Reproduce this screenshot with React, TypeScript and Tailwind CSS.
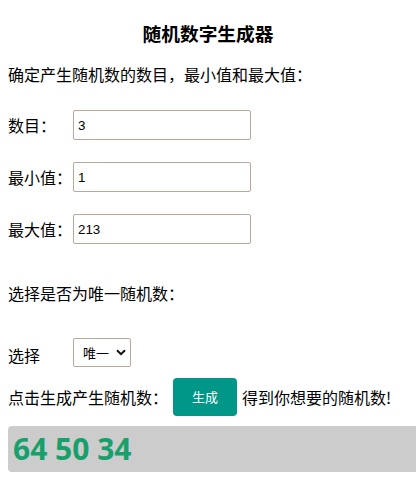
import { useState } from 'react';

const inputCls =
  "h-[30px] w-[178px] rounded-[2px] border border-[#b9a89e] bg-white px-[4px] font-['Liberation_Sans',Arial,sans-serif] text-[13.33px] text-black outline-none";

export default function App() {
  const [count, setCount] = useState('3');
  const [min, setMin] = useState('1');
  const [max, setMax] = useState('213');
  const [unique, setUnique] = useState('unique');
  const [result] = useState('64 50 34');

  return (
    <div className="px-2 font-['Noto_Sans_CJK_SC','Noto_Sans',sans-serif] text-[16px] text-black">
      <h3 className="pt-[20px] text-center text-[18.72px] font-bold leading-[26px]">随机数字生成器</h3>
      <p className="mt-[16px] leading-[24px]">确定产生随机数的数目，最小值和最大值：</p>

      <div className="mt-[24px] flex flex-col gap-[22px]">
        <div className="flex h-[30px] items-center">
          <label className="w-[65px] leading-[24px]">数目：</label>
          <input className={inputCls} value={count} onChange={(e) => setCount(e.target.value)} />
        </div>
        <div className="flex h-[30px] items-center">
          <label className="w-[65px] leading-[24px]">最小值：</label>
          <input className={inputCls} value={min} onChange={(e) => setMin(e.target.value)} />
        </div>
        <div className="flex h-[30px] items-center">
          <label className="w-[65px] leading-[24px]">最大值：</label>
          <input className={inputCls} value={max} onChange={(e) => setMax(e.target.value)} />
        </div>
      </div>

      <p className="mt-[37px] leading-[24px]">选择是否为唯一随机数：</p>

      <div className="mt-[33px] flex h-[29px] items-center">
        <label className="w-[65px] pt-[4px] leading-[24px]">选择</label>
        <div className="relative h-[29px] w-[58px]">
          <select
            value={unique}
            onChange={(e) => setUnique(e.target.value)}
            className="h-full w-full appearance-none rounded-[2px] border border-[#b9a89e] bg-white pl-[9px] text-[13px] text-black outline-none"
          >
            <option value="unique">唯一</option>
            <option value="repeat">可重复</option>
          </select>
          <svg
            className="pointer-events-none absolute right-[5px] top-[11px]"
            width="10"
            height="7"
            viewBox="0 0 10 7"
          >
            <path d="M1 1.2 L5 5.2 L9 1.2" fill="none" stroke="#111" strokeWidth="2" />
          </svg>
        </div>
      </div>

      <div className="mt-[11px] flex h-[38px] items-center">
        <span className="leading-[24px]">点击生成产生随机数：</span>
        <button className="ml-[5px] h-[38px] w-[64px] rounded-[4px] bg-[#009688] text-[13px] text-white">生成</button>
        <span className="ml-[5px] leading-[24px]">得到你想要的随机数!</span>
      </div>

      <div className="-mr-2 mt-[10px] flex h-[46px] items-center rounded-l-[4px] bg-[#cccccc] pl-[5px]">
        <span className="font-['Open_Sans',sans-serif] text-[30px] font-bold leading-none text-[#18a06c]">{result}</span>
      </div>
    </div>
  );
}
